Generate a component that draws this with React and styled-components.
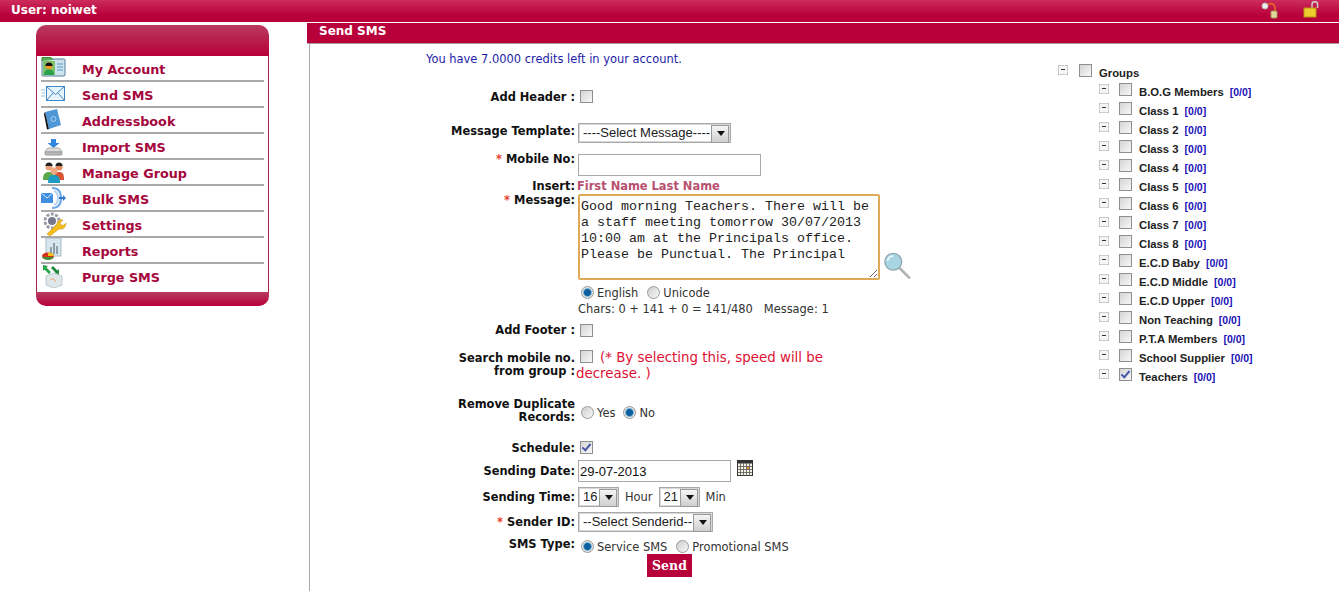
import React from "react";
import styled, { createGlobalStyle } from "styled-components";

const GlobalStyle = createGlobalStyle`
  html, body {
    margin: 0;
    padding: 0;
    background: #fff;
    overflow: hidden;
  }
  body {
    font-family: "DejaVu Sans", Verdana, sans-serif;
    font-size: 11.45px;
  }
`;

const Page = styled.div`
  display: flex;
  flex-direction: column;
  height: 591px;
  width: 1339px;
  overflow: hidden;
`;

const TopBar = styled.header`
  flex: none;
  height: 22px;
  display: flex;
  align-items: center;
  justify-content: space-between;
  padding: 0 20px 2px 11px;
  box-sizing: border-box;
  background: linear-gradient(#cc2c5c, #b8003a 70%);
  color: #fff;
  font-weight: bold;
  font-size: 12px;
`;

const TopIcons = styled.div`
  display: flex;
  gap: 24px;
  align-items: center;
`;

const Body = styled.div`
  flex: 1;
  display: flex;
  min-height: 0;
`;

const SideColumn = styled.aside`
  flex: none;
  width: 271px;
  padding: 3px 0 0 36px;
  box-sizing: border-box;
`;

const SideBox = styled.nav`
  width: 233px;
`;

const SideHead = styled.div`
  height: 31px;
  border-radius: 10px 10px 0 0;
  background: linear-gradient(#b93a5e, #b8003a);
`;

const SideFoot = styled.div`
  height: 14px;
  border-radius: 0 0 10px 10px;
  background: linear-gradient(#b83c60, #b8003a);
`;

const Menu = styled.ul`
  list-style: none;
  margin: 0;
  padding: 0 4px;
  border-left: 1px solid #a8204a;
  border-right: 1px solid #a8204a;
`;

const MenuItem = styled.li`
  height: 24px;
  display: flex;
  border-bottom: 2px solid #a9a9a9;
  color: #a5063c;
  font-weight: bold;
  font-size: 12.75px;
  line-height: 27px;

  &:last-child {
    border-bottom: none;
    height: 28px;
  }
`;

const MenuIcon = styled.span`
  flex: none;
  width: 41px;
  height: 24px;
  display: block;
  svg {
    display: block;
  }
`;

const Main = styled.main`
  flex: 1;
  display: flex;
  flex-direction: column;
  padding-top: 1px;
  min-width: 0;
  margin-left: 36px;
`;

const MainBar = styled.div`
  flex: none;
  height: 20px;
  line-height: 17px;
  padding-left: 12px;
  background: #b8003a;
  border-bottom: 1px solid #a99;
  color: #fff;
  font-weight: bold;
  font-size: 12px;
`;

const Content = styled.div`
  flex: 1;
  display: flex;
  margin-left: 2px;
  border-left: 1px solid #a9a9a9;
`;

const FormColumn = styled.section`
  flex: none;
  width: 632px;
  margin-left: 116px;
  padding-top: 8px;
`;

const Credits = styled.div`
  height: 14px;
  line-height: 14px;
  margin-bottom: 24px;
  color: #1c1ca8;
`;

const Row = styled.div`
  display: grid;
  grid-template-columns: 150px 1fr;
  height: ${(p) => p.$h}px;
`;

const Label = styled.div`
  padding-top: ${(p) => p.$pt || 0}px;
  padding-right: 1px;
  text-align: right;
  font-weight: bold;
  line-height: 13px;
  color: #111;
  white-space: pre-line;
`;

const Star = styled.span`
  color: #e8402a;
  margin-right: 4px;
`;

const Field = styled.div`
  display: flex;
  align-items: flex-start;
  padding-left: 2px;
  padding-top: ${(p) => p.$pt || 0}px;
  color: #333;
`;

const Checkbox = styled.input.attrs({ type: "checkbox" })`
  appearance: none;
  position: relative;
  flex: none;
  width: 13px;
  height: 13px;
  margin: 0 0 0 2px;
  border: 1px solid #8e8f8f;
  box-sizing: border-box;
  background: linear-gradient(135deg, #d4d4d4, #f8f8f8);

  &:checked::after {
    content: "";
    position: absolute;
    left: 3px;
    top: 0;
    width: 3px;
    height: 7px;
    border: solid #4a5aa8;
    border-width: 0 2px 2px 0;
    transform: rotate(40deg);
  }
`;

const Radio = styled.input.attrs({ type: "radio" })`
  appearance: none;
  flex: none;
  width: 13px;
  height: 13px;
  margin: 0 3px 0 0;
  border: 1px solid #999;
  border-radius: 50%;
  box-sizing: border-box;
  background: linear-gradient(135deg, #ccc, #fafafa);

  &:checked {
    background: radial-gradient(circle, #0b5f9e 0 3px, #7fb4d8 4px, #e6e6e6 5px);
  }
`;

const RadioGroup = styled.div`
  display: flex;
  align-items: center;
  margin-left: 3px;
  gap: ${(p) => p.$gap || 9}px;
  line-height: 13px;
`;

const RadioLabel = styled.label`
  display: flex;
  align-items: center;
  span {
    position: relative;
    top: 1px;
  }
`;

const TextInput = styled.input`
  width: ${(p) => p.$w}px;
  height: 22px;
  box-sizing: border-box;
  margin: 0;
  padding: 0 1px;
  border: 1px solid #a9a9a9;
  font-family: "Liberation Sans", Arial, sans-serif;
  font-size: 13px;
  color: #111;
  outline: none;
`;

const SelectBox = styled.div`
  position: relative;
  flex: none;
  width: ${(p) => p.$w}px;
  height: 20px;
  box-sizing: border-box;
  border: 1px solid #a9a9a9;
  box-shadow: inset 0 0 0 1px #d8d8d8;
  background: #fff;

  &::before {
    content: "";
    position: absolute;
    top: 1px;
    right: 1px;
    width: 16px;
    height: 16px;
    background: linear-gradient(#f4f4f4, #cfcfcf);
    border: 1px solid #9a9a9a;
    pointer-events: none;
  }

  &::after {
    content: "";
    position: absolute;
    right: 5px;
    top: 7px;
    border: 4px solid transparent;
    border-top: 5px solid #111;
    border-bottom: none;
    pointer-events: none;
  }
`;

const Select = styled.select`
  appearance: none;
  display: block;
  width: 100%;
  height: 16px;
  border: none;
  padding: 0 0 0 4px;
  background: transparent;
  font-family: "Liberation Sans", Arial, sans-serif;
  font-size: 13px;
  color: #222;
  outline: none;
`;

const Unit = styled.span`
  margin: 3px 6px 0 6px;
  line-height: 14px;
  color: #333;
`;

const InsertLinks = styled.span`
  margin-left: -1px;
  padding-top: 1px;
  line-height: 13px;
  font-weight: bold;
  color: #b85070;
`;

const MessageArea = styled.textarea`
  flex: none;
  width: 302px;
  height: 86px;
  box-sizing: border-box;
  margin: 0;
  padding: 3px 1px 2px;
  border: 2px solid #dfaa55;
  border-radius: 2px;
  font-family: "Liberation Mono", "Courier New", monospace;
  font-size: 13.33px;
  line-height: 16px;
  color: #222;
  outline: none;
  overflow: hidden;
`;

const Zoomer = styled.svg`
  flex: none;
  margin: 57px 0 0 3px;
`;

const CharCount = styled.div`
  line-height: 14px;
  color: #333;
  white-space: pre;
`;

const Warning = styled.div`
  margin-left: -2px;
  width: 270px;
  font-size: 13.4px;
  line-height: 16px;
  color: #dd1133;

  input {
    display: inline-block;
    vertical-align: -1px;
    margin: 0 7px 0 4px;
  }
`;

const CalendarIcon = styled.svg`
  flex: none;
  margin-left: 6px;
`;

const SendButton = styled.button`
  margin: 0 0 0 69px;
  width: 45px;
  height: 23px;
  padding: 0;
  border: none;
  background: #b8003a;
  color: #fff;
  font-family: "DejaVu Serif", serif;
  font-weight: bold;
  font-size: 12.5px;
`;

const Tree = styled.section`
  flex: none;
  padding-top: 19px;
  font-family: "Liberation Sans", Arial, sans-serif;
  font-size: 11px;
  font-weight: bold;
  color: #222;
`;

const TreeRow = styled.div`
  display: flex;
  align-items: flex-start;
  height: 19px;
  padding-left: ${(p) => (p.$child ? 41 : 0)}px;
`;

const Expander = styled.span`
  position: relative;
  flex: none;
  width: 10px;
  height: 10px;
  margin: 2px ${(p) => (p.$child ? 10 : 11)}px 0 0;
  box-sizing: border-box;
  border: 1px dashed #c4c4c4;
  background: #f6f6f6;

  &::after {
    content: "";
    position: absolute;
    left: 2px;
    top: 3px;
    width: 4px;
    height: 1px;
    background: #333;
  }
`;

const TreeCheck = styled(Checkbox)`
  margin: 1px 7px 0 0;
`;

const TreeText = styled.span`
  margin-top: 4px;
  line-height: 13px;
  font-size: 11.3px;
  white-space: pre;
`;

const Count = styled.span`
  margin-left: 6px;
  color: #1a10b8;
  font-size: 10.5px;
`;

const menu = [
  ["My Account", <g key="a"><rect x="1" y="3" width="23" height="17" rx="1" fill="#cfe3ef" stroke="#58809c" /><path d="M1 5V1.500h9L12 4" fill="#5cae55" stroke="#3a8a3e" /><rect x="2" y="5" width="12" height="14" fill="#7cc46c" /><circle cx="8" cy="10" r="3.400" fill="#f29a24" /><path d="M4.400 10a3.600 3.600 0 0 1 7.200 0z" fill="#111" /><path d="M3 19c0-4 2-5.500 5-5.500s5 1.500 5 5.500z" fill="#2aa24a" /><path d="M16 8h6M16 11h6M16 14h6" stroke="#7fb3d2" strokeWidth="1.500" /></g>],
  ["Send SMS", <g key="b"><rect x="5.500" y="4.500" width="18" height="14" fill="#e8f4fc" stroke="#3e86c8" /><path d="M5.500 4.500l9 8 9-8M5.500 18.500l6.500-7.500M23.500 18.500l-6.500-7.500" fill="none" stroke="#3e86c8" /><path d="M0 8h4M1 11h3M0 14h4" stroke="#8cc0e6" /></g>],
  ["Addressbook", <g key="c"><path d="M4 4l12-3 4 16-12 4z" fill="#4f97d6" /><path d="M4 4l4 17-2 .5L3 6z" fill="#111" /><circle cx="12.500" cy="11" r="2.500" fill="none" stroke="#a8d2f2" /></g>],
  ["Import SMS", <g key="d"><path d="M10 5h5v4h3.500l-6 5-6-5H10z" fill="#2f86dc" /><path d="M4 18c1-3 3-4 4-4h9c1 0 3 1 4 4z" fill="#ddd" stroke="#aaa" /><rect x="4" y="18" width="17" height="3" rx="1" fill="#bbb" stroke="#999" /></g>],
  ["Manage Group", <g key="e"><circle cx="8" cy="7" r="3.500" fill="#e9a27a" /><path d="M4.500 6a3.500 3.500 0 0 1 7 0z" fill="#222" /><circle cx="18" cy="7" r="3.500" fill="#e2895f" /><path d="M14.500 6a3.500 3.500 0 0 1 7 0z" fill="#222" /><path d="M2 20c0-6 2-8 6-8s5 2 5 8z" fill="#5aa84a" /><path d="M13 20c0-6 1-8 5-8s5 2 5 8z" fill="#d8532f" /><circle cx="13" cy="11" r="3.500" fill="#f0a882" /><path d="M7 23c0-6 2-8 6-8s6 2 6 8z" fill="#1f9ac2" /></g>],
  ["Bulk SMS", <g key="f"><rect x="0" y="7" width="12" height="10" fill="#3f8ee0" /><path d="M0 7l6 5 6-5" fill="none" stroke="#d6ebff" /><path d="M11 2c6 0 9 4 9 10s-3 10-9 10" fill="none" stroke="#6aa8e8" strokeWidth="2" /><path d="M13 5c3 1 4 4 4 7s-1 6-4 7" fill="none" stroke="#b6d4f2" strokeWidth="2" /><path d="M18 11h4V9l3 3-3 3v-2h-4z" fill="#2f78cc" /></g>],
  ["Settings", <g key="g"><circle cx="11" cy="9" r="7" fill="none" stroke="#9b9bab" strokeWidth="3" strokeDasharray="3 1.500" /><circle cx="11" cy="9" r="4" fill="#777a8c" /><path d="M6 22l10-10c0-3 3-5 6-4l-3 3 1 2 3 0 2-2c0 4-3 7-7 6L9 24z" fill="#f2bd1d" stroke="#c8900e" strokeWidth=".5" /></g>],
  ["Reports", <g key="h"><rect x="5" y="0" width="15" height="18" fill="#d8e6ee" stroke="#a8bac6" /><path d="M9 16V9h2v7zM12 16V5h2v11zM15 16V8h2v8z" fill="#8ea0ac" /><ellipse cx="7" cy="18" rx="6" ry="3.500" fill="#d92f1f" /><path d="M7 18V14.500c3 0 6 1.500 6 3.500z" fill="#f2c01d" /><path d="M1 19c1 2 3 3 6 3s5-1 6-3z" fill="#3f8e3c" /></g>],
  ["Purge SMS", <g key="i"><path d="M2 1l5 1-1.500 1.500L10 8 8 10 3.500 5.500 2 7z" fill="#2aa44a" /><path d="M18 11l-5-1 1.500-1.500L10 4l2-2 4.500 4.500L18 5z" fill="#1f8a3e" /><path d="M5 12l8-3 8 3v9l-8 3-8-3z" fill="#dfe7ea" stroke="#bcc8ce" /><path d="M9 16c2-2 6-1 5 2" fill="none" stroke="#e8a060" /></g>],
];

const groups = [
  "B.O.G Members", "Class 1", "Class 2", "Class 3", "Class 4", "Class 5", "Class 6", "Class 7",
  "Class 8", "E.C.D Baby", "E.C.D Middle", "E.C.D Upper", "Non Teaching", "P.T.A Members",
  "School Supplier", "Teachers",
];

export default function App() {
  return (
    <Page>
      <GlobalStyle />
      <TopBar>
        <span>User: noiwet</span>
        <TopIcons>
          <svg width="18" height="18" viewBox="0 0 18 18">
            <circle cx="4" cy="5" r="3" fill="#eee" stroke="#bbb" />
            <path d="M7 4a4 4 0 0 1 7 2v5" fill="none" stroke="#e87020" strokeWidth="1.500" />
            <rect x="10" y="10" width="6" height="7" rx="1" fill="#e4d9a0" stroke="#a89858" />
          </svg>
          <svg width="16" height="18" viewBox="0 0 16 18">
            <path d="M9 7V3.500a2.800 2.800 0 0 1 5.600 0V7" fill="none" stroke="#ccc" strokeWidth="1.500" />
            <rect x="1" y="7" width="12" height="9" fill="#eecb2f" stroke="#b89412" />
          </svg>
        </TopIcons>
      </TopBar>
      <Body>
        <SideColumn>
          <SideBox>
            <SideHead />
            <Menu>
              {menu.map(([name, icon]) => (
                <MenuItem key={name}>
                  <MenuIcon>
                    <svg width="26" height="24" viewBox="0 0 26 24">{icon}</svg>
                  </MenuIcon>
                  {name}
                </MenuItem>
              ))}
            </Menu>
            <SideFoot />
          </SideBox>
        </SideColumn>
        <Main>
          <MainBar>Send SMS</MainBar>
          <Content>
            <FormColumn>
              <Credits>You have 7.0000 credits left in your account.</Credits>

              <Row $h={30}>
                <Label $pt={1}>Add Header :</Label>
                <Field><Checkbox /></Field>
              </Row>
              <Row $h={32}>
                <Label $pt={5}>Message Template:</Label>
                <Field $pt={3}>
                  <SelectBox $w={153}><Select><option>----Select Message----</option></Select></SelectBox>
                </Field>
              </Row>
              <Row $h={27}>
                <Label $pt={1}><Star>*</Star>Mobile No:</Label>
                <Field $pt={2}><TextInput $w={183} /></Field>
              </Row>
              <Row $h={15}>
                <Label $pt={1}>Insert:</Label>
                <Field><InsertLinks>First Name Last Name</InsertLinks></Field>
              </Row>
              <Row $h={92}>
                <Label><Star>*</Star>Message:</Label>
                <Field>
                  <MessageArea
                    readOnly
                    defaultValue="Good morning Teachers. There will be a staff meeting tomorrow 30/07/2013 10:00 am at the Principals office. Please be Punctual. The Principal"
                  />
                  <Zoomer width="28" height="29" viewBox="0 0 30 30">
                    <path d="M18 18l10 10" stroke="#b4b4b4" strokeWidth="3" strokeLinecap="round" />
                    <circle cx="11" cy="11" r="9" fill="#a9d5e2" stroke="#8fa9b4" strokeWidth="1.500" />
                    <path d="M5 10a6 6 0 0 1 6-5" fill="none" stroke="#e8f6fa" strokeWidth="2" />
                  </Zoomer>
                </Field>
              </Row>
              <Row $h={15}>
                <Label />
                <Field>
                  <RadioGroup>
                    <RadioLabel><Radio name="enc" defaultChecked /><span>English</span></RadioLabel>
                    <RadioLabel><Radio name="enc" /><span>Unicode</span></RadioLabel>
                  </RadioGroup>
                </Field>
              </Row>
              <Row $h={15}>
                <Label />
                <Field $pt={1}><CharCount>Chars: 0 + 141 + 0 = 141/480   Message: 1</CharCount></Field>
              </Row>
              <Row $h={30}>
                <Label $pt={8}>Add Footer :</Label>
                <Field $pt={8}><Checkbox /></Field>
              </Row>
              <Row $h={44}>
                <Label $pt={6}>{"Search mobile no.\nfrom group :"}</Label>
                <Field $pt={4}>
                  <Warning><Checkbox />(* By selecting this, speed will be decrease. )</Warning>
                </Field>
              </Row>
              <Row $h={50}>
                <Label $pt={8}>{"Remove Duplicate\nRecords:"}</Label>
                <Field $pt={16}>
                  <RadioGroup $gap={8}>
                    <RadioLabel><Radio name="dup" /><span>Yes</span></RadioLabel>
                    <RadioLabel><Radio name="dup" defaultChecked /><span>No</span></RadioLabel>
                  </RadioGroup>
                </Field>
              </Row>
              <Row $h={20}>
                <Label $pt={2}>Schedule:</Label>
                <Field $pt={1}><Checkbox defaultChecked /></Field>
              </Row>
              <Row $h={27}>
                <Label $pt={5}>Sending Date:</Label>
                <Field>
                  <TextInput $w={153} defaultValue="29-07-2013" />
                  <CalendarIcon width="16" height="17" viewBox="0 0 16 17">
                    <rect x=".5" y=".5" width="15" height="15" fill="#f4f0e4" stroke="#333" />
                    <rect x=".5" y=".5" width="15" height="3" fill="#333" />
                    <path d="M.5 6.500h15M.5 9.500h15M.5 12.500h15M3.500 3v13M6.500 3v13M9.500 3v13M12.500 3v13" stroke="#555" strokeWidth=".8" />
                    <rect x="10" y="7" width="2" height="2" fill="#e89020" />
                  </CalendarIcon>
                </Field>
              </Row>
              <Row $h={25}>
                <Label $pt={4}>Sending Time:</Label>
                <Field>
                  <SelectBox $w={41}><Select><option>16</option></Select></SelectBox>
                  <Unit>Hour</Unit>
                  <SelectBox $w={41}><Select><option>21</option></Select></SelectBox>
                  <Unit>Min</Unit>
                </Field>
              </Row>
              <Row $h={25}>
                <Label $pt={4}><Star>*</Star>Sender ID:</Label>
                <Field>
                  <SelectBox $w={135}><Select><option>--Select Senderid--</option></Select></SelectBox>
                </Field>
              </Row>
              <Row $h={17}>
                <Label $pt={1}>SMS Type:</Label>
                <Field $pt={3}>
                  <RadioGroup $gap={9}>
                    <RadioLabel><Radio name="type" defaultChecked /><span>Service SMS</span></RadioLabel>
                    <RadioLabel><Radio name="type" /><span>Promotional SMS</span></RadioLabel>
                  </RadioGroup>
                </Field>
              </Row>
              <Row $h={23}>
                <Label />
                <Field><SendButton>Send</SendButton></Field>
              </Row>
            </FormColumn>

            <Tree>
              <TreeRow>
                <Expander />
                <TreeCheck />
                <TreeText>Groups</TreeText>
              </TreeRow>
              {groups.map((g) => (
                <TreeRow key={g} $child>
                  <Expander $child />
                  <TreeCheck defaultChecked={g === "Teachers"} />
                  <TreeText>{g}<Count>[0/0]</Count></TreeText>
                </TreeRow>
              ))}
            </Tree>
          </Content>
        </Main>
      </Body>
    </Page>
  );
}
